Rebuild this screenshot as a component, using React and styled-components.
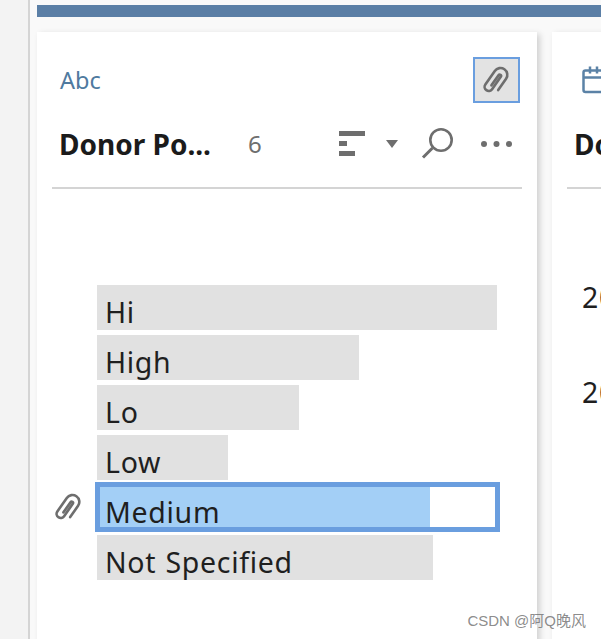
import React from 'react';
import styled, { createGlobalStyle } from 'styled-components';

const GlobalStyle = createGlobalStyle`
  html, body {
    margin: 0;
    padding: 0;
    height: 100%;
    overflow: hidden;
    background: #f9f9f9;
    font-family: "Noto Sans", "Open Sans", sans-serif;
    color: #1f1f1f;
  }
`;

const Page = styled.div`
  position: relative;
  display: flex;
  width: 601px;
  height: 639px;
  overflow: hidden;
`;

const SideRail = styled.div`
  flex: 0 0 28px;
  background: #f3f3f3;
  border-right: 2px solid #d4d4d4;
`;

const Main = styled.div`
  flex: 1;
  min-width: 0;
  padding: 5px 0 0 7px;
`;

const TopBar = styled.div`
  height: 12px;
  background: #5b7fa6;
`;

const Cards = styled.div`
  display: flex;
  gap: 15px;
  margin-top: 15px;
`;

const Card = styled.section`
  flex: 0 0 500px;
  height: 620px;
  box-sizing: border-box;
  padding: 25px 15px 0;
  background: #fff;
  box-shadow: 3px 2px 6px rgba(0, 0, 0, 0.16);
`;

const TypeRow = styled.div`
  display: flex;
  align-items: center;
  height: 46px;
  padding: 0 2px 0 8px;
`;

const TypeLabel = styled.span`
  font-size: 23.5px;
  line-height: 46px;
  color: #4f7a9f;
`;

const PinButton = styled.div`
  display: flex;
  align-items: center;
  justify-content: center;
  box-sizing: border-box;
  width: 47px;
  height: 46px;
  margin-left: auto;
  background: #e3e3e3;
  border: 2px solid #6a9edf;
`;

const TitleRow = styled.div`
  display: flex;
  align-items: center;
  height: 84px;
  padding: 0 10px 0 8px;
  border-bottom: 2px solid #d4d4d4;
`;

const Title = styled.h2`
  flex: 0 0 188px;
  margin: -2px 0 0 -1px;
  font-size: 28px;
  font-weight: 700;
  line-height: 40px;
  white-space: nowrap;
  color: #1b1b1b;
`;

const Count = styled.span`
  margin: -3px 0 0 1px;
  font-size: 24px;
  line-height: 32px;
  color: #6e6e6e;
`;

const Tools = styled.div`
  display: flex;
  align-items: center;
  margin: -3px 0 0 auto;
`;

const SortIcon = styled.svg`
  display: block;
  margin-right: 21px;
`;

const CaretIcon = styled.svg`
  display: block;
  margin-right: 23px;
`;

const SearchIcon = styled.svg`
  display: block;
  margin-right: 27px;
`;

const CalendarIcon = styled.svg`
  display: block;
  margin-left: 7px;
`;

const List = styled.div`
  display: flex;
  flex-direction: column;
  gap: 5px;
  padding-top: 96px;
`;

const Row = styled.div`
  display: flex;
  align-items: center;
  height: 45px;
`;

const PinSlot = styled.div`
  flex: 0 0 45px;
  display: flex;
  align-items: center;
`;

const Bar = styled.div`
  display: flex;
  align-items: flex-end;
  box-sizing: border-box;
  width: ${(p) => p.$width}px;
  height: 45px;
  padding-left: 8px;
  background: #e1e1e1;
`;

const SelectedTrack = styled.div`
  position: relative;
  box-sizing: border-box;
  flex: 0 0 405px;
  height: 50px;
  margin: -3px 0 -2px -2px;
  background: #fff;
  border: 5px solid #6a9edf;
`;

const SelectedFill = styled.div`
  display: flex;
  align-items: flex-end;
  box-sizing: border-box;
  height: 100%;
  padding-left: 5px;
  background: #a3cff6;
`;

const BarText = styled.span`
  margin-bottom: ${(p) => (p.$selected ? '-3px' : '0')};
  font-size: 28.5px;
  line-height: 36px;
  letter-spacing: 0.7px;
  word-spacing: 1px;
  white-space: nowrap;
  color: #1f1f1f;
`;

const YearList = styled.div`
  display: flex;
  flex-direction: column;
  gap: 55px;
  padding: 88px 0 0 15px;
`;

const Year = styled.div`
  font-size: 28.5px;
  line-height: 40px;
  letter-spacing: 0.7px;
  color: #1f1f1f;
`;

const Watermark = styled.div`
  position: absolute;
  right: 15px;
  bottom: 8px;
  font-family: "Liberation Sans", "Noto Sans CJK SC", sans-serif;
  font-size: 15px;
  line-height: 20px;
  color: rgba(110, 110, 110, 0.8);
`;

const Paperclip = () => (
  <svg width="33" height="33" viewBox="0 0 24 24" fill="none" stroke="#6e6e6e" strokeWidth="1.9" strokeLinecap="round">
    <path
      transform="rotate(35 12 12)"
      d="M17 17V7a5 5 0 0 0-10 0v12a3 3 0 0 0 6 0V8a1 1 0 0 0-2 0v9"
    />
  </svg>
);

const Calendar = () => (
  <CalendarIcon width="32" height="28" viewBox="0 0 32 28" fill="none" stroke="#5b82a6" strokeWidth="2.5">
    <rect x="1.5" y="4.5" width="29" height="21.5" rx="2" />
    <path d="M1.5 11.5h29M8 0.5v7M15 0.5v7M22 0.5v7" />
  </CalendarIcon>
);

const rows = [
  { label: 'Hi', width: 400 },
  { label: 'High', width: 262 },
  { label: 'Lo', width: 202 },
  { label: 'Low', width: 131 },
  { label: 'Medium', fill: 330, selected: true },
  { label: 'Not Specified', width: 336 },
];

function App() {
  return (
    <Page>
      <GlobalStyle />
      <SideRail />
      <Main>
        <TopBar />
        <Cards>
          <Card>
            <TypeRow>
              <TypeLabel>Abc</TypeLabel>
              <PinButton>
                <Paperclip />
              </PinButton>
            </TypeRow>
            <TitleRow>
              <Title>Donor Po...</Title>
              <Count>6</Count>
              <Tools>
                <SortIcon width="26" height="25" viewBox="0 0 26 25" fill="#6e6e6e">
                  <rect x="0" y="0" width="26" height="5" />
                  <rect x="0" y="10" width="8" height="5" />
                  <rect x="0" y="20" width="16" height="5" />
                </SortIcon>
                <CaretIcon width="12" height="8" viewBox="0 0 12 8" fill="#6e6e6e">
                  <path d="M0 0h12L6 8z" />
                </CaretIcon>
                <SearchIcon width="33" height="32" viewBox="0 0 33 32" fill="none" stroke="#6e6e6e" strokeWidth="2.6">
                  <circle cx="20" cy="12" r="10.7" />
                  <path d="M11.5 20L2 29.5" strokeWidth="3" />
                </SearchIcon>
                <svg width="31" height="6" viewBox="0 0 31 6" fill="#6e6e6e">
                  <circle cx="3" cy="3" r="3" />
                  <circle cx="15.5" cy="3" r="3" />
                  <circle cx="28" cy="3" r="3" />
                </svg>
              </Tools>
            </TitleRow>
            <List>
              {rows.map((row) => (
                <Row key={row.label}>
                  <PinSlot>{row.selected && <Paperclip />}</PinSlot>
                  {row.selected ? (
                    <SelectedTrack>
                      <SelectedFill style={{ width: row.fill }}>
                        <BarText $selected>{row.label}</BarText>
                      </SelectedFill>
                    </SelectedTrack>
                  ) : (
                    <Bar $width={row.width}>
                      <BarText>{row.label}</BarText>
                    </Bar>
                  )}
                </Row>
              ))}
            </List>
          </Card>
          <Card>
            <TypeRow>
              <Calendar />
            </TypeRow>
            <TitleRow>
              <Title>Donor Da...</Title>
            </TitleRow>
            <YearList>
              <Year>2017</Year>
              <Year>2018</Year>
            </YearList>
          </Card>
        </Cards>
      </Main>
      <Watermark>CSDN @阿Q晚风</Watermark>
    </Page>
  );
}

export default App;
